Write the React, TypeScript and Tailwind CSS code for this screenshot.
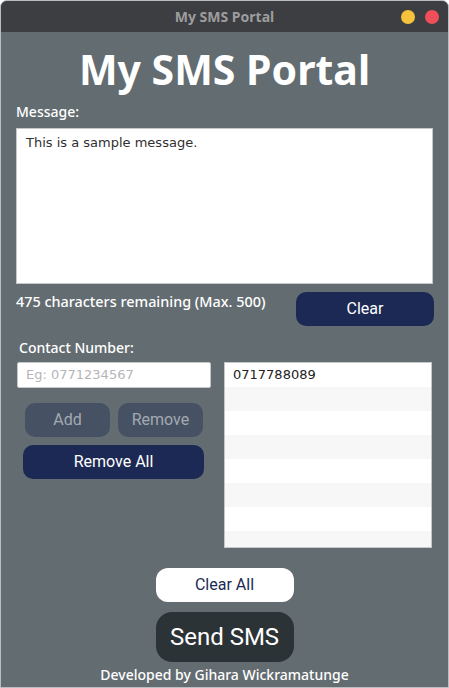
export default function App() {
  const rows = ["0717788089", "", "", "", "", "", "", ""]
  return (
    <div className="w-[449px] h-[688px] bg-[#636c71] flex flex-col rounded-t-[7px] overflow-hidden border border-[#b9bdbf] font-['Noto_Sans',sans-serif]">
      {/* title bar */}
      <div className="relative h-[31px] shrink-0 bg-[#3c3e42] flex items-center justify-center">
        <span className="text-[14px] font-bold text-[#9d9d9d]">My SMS Portal</span>
        <div className="absolute right-[9px] top-[9px] flex gap-[10px]">
          <span className="w-[14px] h-[14px] rounded-full bg-[#f7c23c]" />
          <span className="w-[14px] h-[14px] rounded-full bg-[#ef4f58]" />
        </div>
      </div>

      <div className="flex flex-col px-[15px]">
        <h1 className="text-center text-white font-bold text-[41px] leading-[48px] mt-[13px]">My SMS Portal</h1>

        <label className="text-white text-[14px] font-medium mt-[9px] leading-[20px]">Message:</label>
        <div className="mt-[6px] h-[156px] bg-white border border-[#c5c8ca] px-[9px] py-[4px] text-[13px] text-[#2f2f2f] font-['DejaVu_Sans',sans-serif]">
          This is a sample message.
        </div>

        <div className="flex justify-between mt-[8px]">
          <span className="text-white text-[14.4px] font-medium leading-[18px] mt-[1px]">475 characters remaining (Max. 500)</span>
          <button className="w-[138px] h-[34px] rounded-[10px] bg-[#1b2954] text-white text-[16px] font-['Roboto',sans-serif] mr-[-1px]">Clear</button>
        </div>

        <div className="flex gap-[13px] mt-[12px]">
          <div className="flex flex-col w-[195px]">
            <label className="text-white text-[14px] font-medium ml-[3px] leading-[20px]">Contact Number:</label>
            <div className="mt-[4px] ml-[1px] h-[26px] bg-white border border-[#c5c8ca] rounded-[2px] px-[8px] flex items-center text-[13px] text-[#b5b5b8] font-['DejaVu_Sans',sans-serif]">
              Eg: 0771234567
            </div>
            <div className="flex gap-[8px] ml-[9px] mt-[15px]">
              <button className="w-[85px] h-[34px] rounded-[10px] bg-[#465263] text-[#a4a9b1] text-[16px] font-['Roboto',sans-serif]">Add</button>
              <button className="w-[85px] h-[34px] rounded-[10px] bg-[#465263] text-[#a4a9b1] text-[16px] font-['Roboto',sans-serif]">Remove</button>
            </div>
            <button className="ml-[7px] mt-[8px] w-[181px] h-[34px] rounded-[10px] bg-[#1b2954] text-white text-[16px] font-['Roboto',sans-serif]">Remove All</button>
          </div>

          <div className="mt-[24px] w-[208px] h-[186px] bg-white border border-[#c5c8ca] overflow-hidden">
            {rows.map((r, i) => (
              <div key={i} className={`h-[24px] px-[8px] flex items-center text-[13px] text-[#222] font-['DejaVu_Sans',sans-serif] ${i % 2 === 1 ? "bg-[#f7f7f7]" : "bg-white"}`}>
                {r}
              </div>
            ))}
          </div>
        </div>

        <div className="flex flex-col items-center mt-[20px]">
          <button className="w-[138px] h-[34px] rounded-[12px] bg-white text-[#1b2954] text-[16px] font-['Roboto',sans-serif]">Clear All</button>
          <button className="mt-[10px] w-[138px] h-[50px] rounded-[16px] bg-[#2c3336] text-white text-[24px] font-['Roboto',sans-serif]">Send SMS</button>
          <span className="mt-[3px] text-white text-[14px] font-medium leading-[20px]">Developed by Gihara Wickramatunge</span>
        </div>
      </div>
    </div>
  )
}
